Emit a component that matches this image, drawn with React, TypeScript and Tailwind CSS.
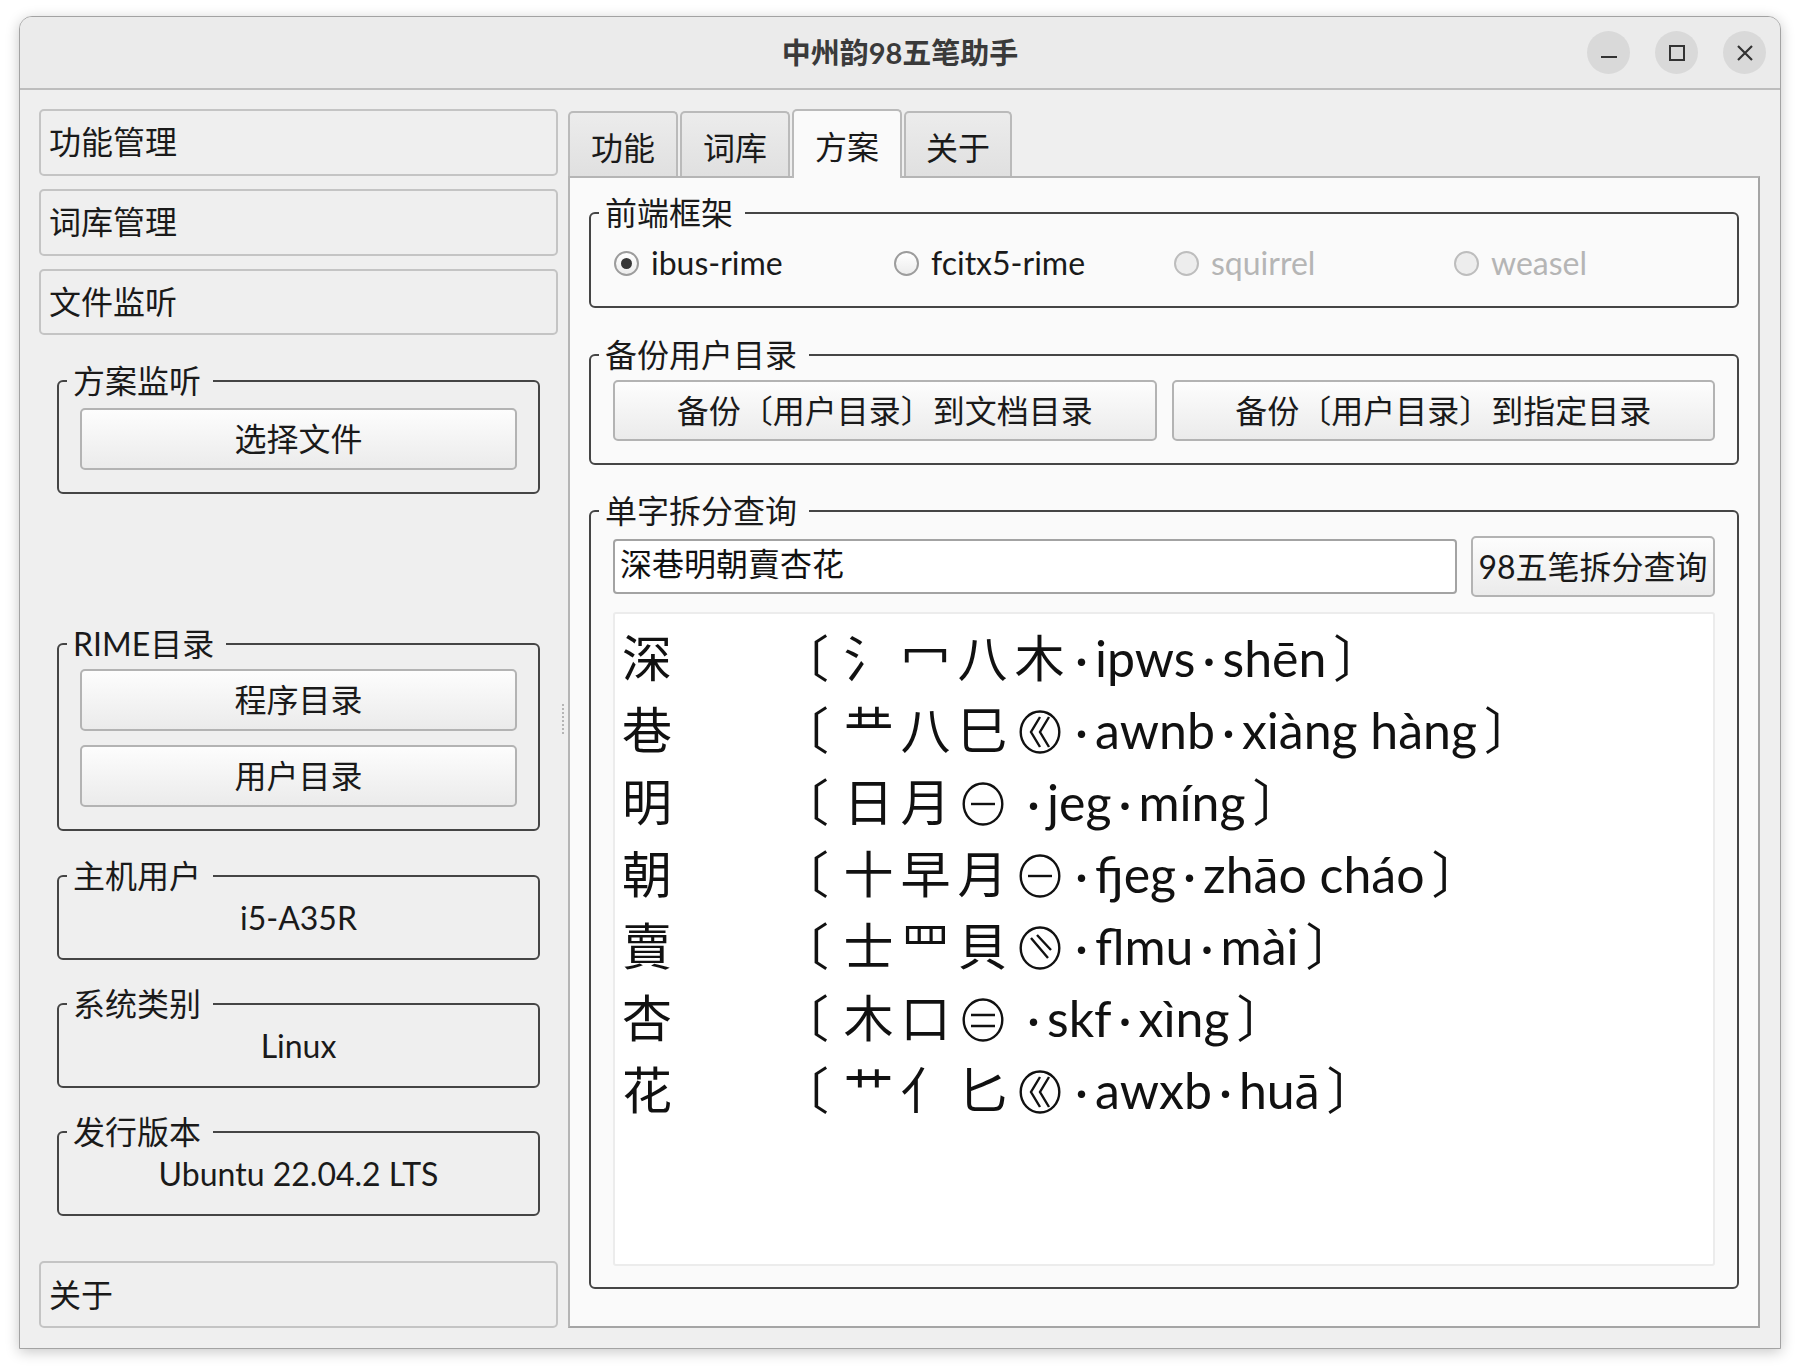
import React from 'react'

type Row = { ch: string; parts: string[]; code: string; py: string; gap?: boolean }

const rows: Row[] = [
  { ch: '深', parts: ['氵', '冖', '八', '木'], code: 'ipws', py: 'shēn' },
  { ch: '巷', parts: ['龷', '八', '巳', 'Z'], code: 'awnb', py: 'xiàng hàng' },
  { ch: '明', parts: ['日', '月', 'H'], code: 'jeg', py: 'míng', gap: true },
  { ch: '朝', parts: ['十', '早', '月', 'H'], code: 'fjeg', py: 'zhāo cháo' },
  { ch: '賣', parts: ['士', '罒', '貝', 'D'], code: 'flmu', py: 'mài' },
  { ch: '杏', parts: ['木', '口', 'HH'], code: 'skf', py: 'xìng', gap: true },
  { ch: '花', parts: ['艹', '亻', '匕', 'Z'], code: 'awxb', py: 'huā' },
]

// 识别码标记：圆圈里的笔画
function Mark({ kind }: { kind: string }) {
  return (
    <svg width="42" height="44" viewBox="0 0 42 44" fill="none" stroke="#111" strokeWidth="2.4" className="inline-block align-[-5px]">
      <ellipse cx="21" cy="22" rx="19.3" ry="20.5" />
      {kind === 'H' && <path d="M9 22h24" />}
      {kind === 'HH' && <path d="M9 17h24M9 28h24" />}
      {kind === 'D' && <path d="M12 12l17 20M18 9l14 15" />}
      {kind === 'Z' && <path d="M21 7l-9 15 9 15M30 7l-9 15 9 15" />}
    </svg>
  )
}

function Dot() {
  return <span className="px-[7px]">·</span>
}

function Group({ title, className = '', children }: { title: string; className?: string; children: React.ReactNode }) {
  return (
    <fieldset className={`rounded-[6px] border-2 border-[#454545] ${className}`}>
      <legend className="ml-[8px] pl-[6px] pr-[12px] text-[32px] leading-[36px] text-[#1a1a1a]">{title}</legend>
      {children}
    </fieldset>
  )
}

function NavButton({ children, className = '' }: { children: React.ReactNode; className?: string }) {
  return (
    <div className={`flex h-[67px] items-center rounded-[5px] border-2 border-[#c4c4c4] bg-[#efefef] pl-[8px] text-[32px] text-[#1a1a1a] ${className}`}>
      {children}
    </div>
  )
}

function PushButton({ children, className = '' }: { children: React.ReactNode; className?: string }) {
  return (
    <div className={`flex items-center justify-center rounded-[5px] border-2 border-[#b3b3b3] bg-linear-to-b from-[#fdfdfd] to-[#ebebeb] text-[32px] text-[#1a1a1a] ${className}`}>
      {children}
    </div>
  )
}

function Radio({ label, checked, disabled }: { label: string; checked?: boolean; disabled?: boolean }) {
  return (
    <div className="flex h-[40px] items-center gap-[12px]">
      <span
        className={`flex h-[25px] w-[25px] items-center justify-center rounded-full border-2 ${
          disabled ? 'border-[#bdbdbd] bg-[#ededed]' : 'border-[#9c9c9c] bg-linear-to-b from-[#ffffff] to-[#ececec]'
        }`}
      >
        {checked && <span className="h-[11px] w-[11px] rounded-full bg-[#363636]" />}
      </span>
      <span className={`text-[32px] leading-[36px] ${disabled ? 'text-[#b5b5b5]' : 'text-[#1a1a1a]'}`}>{label}</span>
    </div>
  )
}

function InfoGroup({ title, value, className = '' }: { title: string; value: string; className?: string }) {
  return (
    <Group title={title} className={`mx-[18px] ${className}`}>
      <div className="pb-[22px] pt-[6px] text-center text-[32px] leading-[36px] text-[#1a1a1a]">{value}</div>
    </Group>
  )
}

export default function App() {
  return (
    <div className="h-[1368px] w-[1800px] bg-white pl-[19px] pt-[16px] font-['Lato','Noto_Sans_CJK_SC',sans-serif]">
      <div className="flex h-[1333px] w-[1762px] flex-col overflow-hidden rounded-t-[13px] border border-[#a3a3a3] bg-[#efefef] shadow-[0_3px_14px_rgba(0,0,0,0.22)]">
        {/* 标题栏 */}
        <div className="grid h-[73px] shrink-0 grid-cols-[1fr_auto_1fr] items-center border-b-2 border-[#bdbdbd] bg-[#ebebeb]">
          <div />
          <div className="text-[29px] font-bold text-[#3a3a3a]">中州韵98五笔助手</div>
          <div className="flex items-center justify-end gap-[25px] pr-[14px]">
            <span className="flex h-[43px] w-[43px] items-center justify-center rounded-full bg-[#d9d9d9]">
              <span className="mt-[8px] h-[2px] w-[16px] bg-[#333]" />
            </span>
            <span className="flex h-[43px] w-[43px] items-center justify-center rounded-full bg-[#d9d9d9]">
              <span className="h-[16px] w-[16px] border-2 border-[#333]" />
            </span>
            <span className="flex h-[43px] w-[43px] items-center justify-center rounded-full bg-[#d9d9d9]">
              <svg width="16" height="16" viewBox="0 0 16 16" stroke="#333" strokeWidth="2.2">
                <path d="M1 1l14 14M15 1L1 15" />
              </svg>
            </span>
          </div>
        </div>

        {/* 主体 */}
        <div className="flex min-h-0 flex-1 pb-[20px] pl-[19px] pr-[20px] pt-[19px]">
          {/* 侧栏 */}
          <div className="flex w-[519px] flex-col">
            <NavButton>功能管理</NavButton>
            <NavButton className="mt-[13px]">词库管理</NavButton>
            <NavButton className="mt-[13px]">文件监听</NavButton>

            <Group title="方案监听" className="mx-[18px] mt-[28px]">
              <div className="px-[21px] pb-[22px] pt-[9px]">
                <PushButton className="h-[62px]">选择文件</PushButton>
              </div>
            </Group>

            <Group title="RIME目录" className="mx-[18px] mt-[132px]">
              <div className="flex flex-col gap-[14px] px-[21px] pb-[22px] pt-[7px]">
                <PushButton className="h-[62px]">程序目录</PushButton>
                <PushButton className="h-[62px]">用户目录</PushButton>
              </div>
            </Group>

            <InfoGroup title="主机用户" value="i5-A35R" className="mt-[27px]" />
            <InfoGroup title="系统类别" value="Linux" className="mt-[26px]" />
            <InfoGroup title="发行版本" value="Ubuntu 22.04.2 LTS" className="mt-[26px]" />

            <NavButton className="mt-[45px]">关于</NavButton>
          </div>

          {/* 分隔条 */}
          <div className="flex w-[10px] items-center justify-center">
            <span className="h-[30px] border-l-2 border-dotted border-[#b5b5b5]" />
          </div>

          {/* 标签页 */}
          <div className="flex flex-1 flex-col">
            <div className="flex h-[67px] items-end gap-[2px] text-[32px] text-[#1a1a1a]">
              <div className="flex h-[65px] w-[110px] items-center justify-center rounded-t-[5px] border-2 border-b-0 border-[#bababa] bg-linear-to-b from-[#ececec] to-[#e0e0e0] pt-[6px]">功能</div>
              <div className="flex h-[65px] w-[110px] items-center justify-center rounded-t-[5px] border-2 border-b-0 border-[#bababa] bg-linear-to-b from-[#ececec] to-[#e0e0e0] pt-[6px]">词库</div>
              <div className="relative z-10 -mb-[2px] flex h-[69px] w-[110px] items-center justify-center rounded-t-[5px] border-2 border-b-0 border-[#bababa] bg-[#fafafa] pt-[4px]">方案</div>
              <div className="flex h-[65px] w-[108px] items-center justify-center rounded-t-[5px] border-2 border-b-0 border-[#bababa] bg-linear-to-b from-[#ececec] to-[#e0e0e0] pt-[6px]">关于</div>
            </div>

            <div className="flex-1 border-2 border-[#b5b5b5] border-b-[#a5a5a5] border-r-[#a5a5a5] bg-[#fafafa] px-[19px] pt-[17px]">
              <Group title="前端框架">
                <div className="grid grid-cols-4 pb-[23px] pl-[23px] pr-[3px] pt-[12px]">
                  <Radio label="ibus-rime" checked />
                  <Radio label="fcitx5-rime" />
                  <Radio label="squirrel" disabled />
                  <Radio label="weasel" disabled />
                </div>
              </Group>

              <Group title="备份用户目录" className="mt-[29px]">
                <div className="flex gap-[15px] px-[22px] pb-[22px] pt-[7px]">
                  <PushButton className="h-[61px] flex-1">备份〔用户目录〕到文档目录</PushButton>
                  <PushButton className="h-[61px] flex-1">备份〔用户目录〕到指定目录</PushButton>
                </div>
              </Group>

              <Group title="单字拆分查询" className="mt-[28px]">
                <div className="px-[22px] pb-[21px] pt-[7px]">
                  <div className="flex h-[61px] items-center gap-[14px]">
                    <div className="flex h-[55px] flex-1 items-start rounded-[4px] border-2 border-[#a3a3a3] bg-white pl-[5px] pt-[2px] text-[32px] leading-[42px] text-[#111]">
                      深巷明朝賣杏花
                    </div>
                    <PushButton className="h-[61px] w-[244px]">98五笔拆分查询</PushButton>
                  </div>
                  <div className="mt-[15px] h-[654px] rounded-[3px] border-2 border-[#ececec] bg-white pl-[7px] pt-[8px] text-[50px] text-[#111]">
                    {rows.map((r) => (
                      <div key={r.ch} className="h-[72px] whitespace-nowrap leading-[72px]">
                        <span className="inline-block w-[157px]">{r.ch}</span>
                        <span className="mr-[11px] inline-block">〔</span>
                        {r.parts.map((p, i) => (
                          <span key={i} className="inline-block w-[57px] text-center">
                            {p === 'H' || p === 'HH' || p === 'D' || p === 'Z' ? <Mark kind={p} /> : p}
                          </span>
                        ))}
                        {r.gap && <span className="inline-block w-[9px]" />}
                        <Dot />
                        {r.code}
                        <Dot />
                        {r.py}
                        <span className="ml-[7px] inline-block">〕</span>
                      </div>
                    ))}
                  </div>
                </div>
              </Group>
            </div>
          </div>
        </div>
      </div>
    </div>
  )
}
